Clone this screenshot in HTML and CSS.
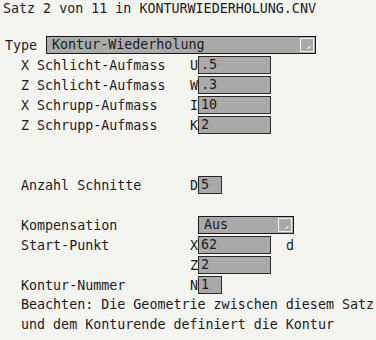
FILE: index.html
```html
<!DOCTYPE html>
<html>
<head>
<meta charset="utf-8">
<link rel="stylesheet" href="styles.css">
</head>
<body>
<div class="screen">
  <div class="title">Satz 2 von 11 in KONTURWIEDERHOLUNG.CNV</div>
  <div class="type-row">
    <span class="type-label">Type</span>
    <div class="select select-wide"><span>Kontur-Wiederholung</span><span class="btn"></span></div>
  </div>
  <div class="row"><span class="label">X Schlicht-Aufmass</span><span class="letter">U</span><span class="field">.5</span></div>
  <div class="row"><span class="label">Z Schlicht-Aufmass</span><span class="letter">W</span><span class="field">.3</span></div>
  <div class="row"><span class="label">X Schrupp-Aufmass</span><span class="letter">I</span><span class="field">10</span></div>
  <div class="row"><span class="label">Z Schrupp-Aufmass</span><span class="letter">K</span><span class="field">2</span></div>
  <div class="spacer"></div>
  <div class="spacer"></div>
  <div class="row"><span class="label">Anzahl Schnitte</span><span class="letter">D</span><span class="field field-small">5</span></div>
  <div class="spacer"></div>
  <div class="row"><span class="label">Kompensation</span><span class="letter"></span><div class="select select-short"><span>Aus</span><span class="btn"></span></div></div>
  <div class="row"><span class="label">Start-Punkt</span><span class="letter">X</span><span class="field">62</span><span class="unit">d</span></div>
  <div class="row"><span class="label"></span><span class="letter">Z</span><span class="field">2</span></div>
  <div class="row"><span class="label">Kontur-Nummer</span><span class="letter">N</span><span class="field field-small">1</span></div>
  <div class="text">Beachten: Die Geometrie zwischen diesem Satz</div>
  <div class="text">und dem Konturende definiert die Kontur</div>
</div>
</body>
</html>
```

FILE: styles.css
```css
html, body {
  margin: 0;
  padding: 0;
}
body {
  background: #f4f4f1;
  font-family: "DejaVu Sans Mono", monospace;
  font-size: 13.33px;
  color: #1c1c1c;
}
.screen {
  width: 376px;
  height: 340px;
  overflow: hidden;
}
.title {
  height: 18px;
  line-height: 18px;
  padding-left: 3px;
  margin-bottom: 17px;
}
.type-row {
  display: flex;
  align-items: center;
  height: 20px;
  padding-left: 5px;
}
.type-label {
  width: 41px;
}
.select {
  box-sizing: border-box;
  height: 18px;
  border: 1px solid #1a1a1a;
  background: #a9a9a9;
  display: flex;
  align-items: center;
  justify-content: space-between;
  padding-left: 5px;
  padding-right: 1px;
  line-height: 16px;
}
.select-wide {
  width: 270px;
}
.select-short {
  width: 96px;
}
.btn {
  position: relative;
  box-sizing: border-box;
  width: 14px;
  height: 14px;
  border: 1px solid #f2f2f2;
  background: #a9a9a9;
}
.btn::after {
  content: "";
  position: absolute;
  right: 2px;
  bottom: 3px;
  width: 4px;
  height: 1px;
  background: #ffffff;
  transform: rotate(-45deg);
}
.row {
  display: flex;
  align-items: center;
  height: 20px;
  padding-left: 21px;
}
.label {
  width: 169px;
  flex: none;
}
.letter {
  width: 8px;
  flex: none;
}
.field {
  box-sizing: border-box;
  width: 73px;
  height: 18px;
  border: 1px solid #2a2a2a;
  background: #a9a9a9;
  padding-left: 2px;
  line-height: 16px;
}
.field-small {
  width: 24px;
}
.unit {
  margin-left: 15px;
}
.spacer {
  height: 20px;
}
.text {
  height: 20px;
  line-height: 20px;
  padding-left: 21px;
  white-space: nowrap;
}
```
